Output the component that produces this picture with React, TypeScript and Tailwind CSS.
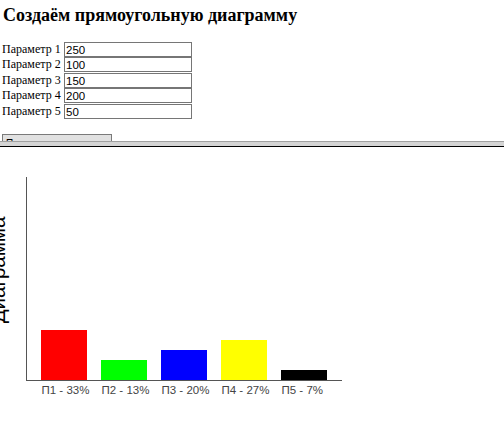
import React from 'react';

const params = [
  { label: 'Параметр 1', value: '250', h: 'h-[15px]' },
  { label: 'Параметр 2', value: '100', h: 'h-[16px]' },
  { label: 'Параметр 3', value: '150', h: 'h-[15px]' },
  { label: 'Параметр 4', value: '200', h: 'h-[16px]' },
  { label: 'Параметр 5', value: '50', h: 'h-[15px]' },
];

const bars = [
  { name: 'П1', value: 250, color: '#ff0000' },
  { name: 'П2', value: 100, color: '#00ff00' },
  { name: 'П3', value: 150, color: '#0000ff' },
  { name: 'П4', value: 200, color: '#ffff00' },
  { name: 'П5', value: 50, color: '#000000' },
];

function BarChart() {
  const total = bars.reduce((s, b) => s + b.value, 0);
  const base = 233;
  return (
    <svg width={504} height={280} className="block">
      <text
        transform="rotate(-90)"
        x={-123}
        y={5}
        textAnchor="middle"
        fontSize={20.5}
        fontFamily="'Liberation Sans', Arial, sans-serif"
        fill="#000"
      >
        Диаграмма
      </text>
      <line x1={26.5} y1={30} x2={26.5} y2={base + 1} stroke="#555" strokeWidth={1} />
      <line x1={26} y1={base + 0.5} x2={342} y2={base + 0.5} stroke="#555" strokeWidth={1} />
      {bars.map((b, i) => {
        const x = 41 + i * 60;
        const h = b.value / 5;
        const pct = Math.round((b.value / total) * 100);
        return (
          <g key={b.name}>
            <rect x={x} y={base - h} width={46} height={h} fill={b.color} />
            <text
              x={x + 0.5}
              y={247}
              fontSize={11.5}
              fontFamily="'Liberation Sans', Arial, sans-serif"
              fill="#444"
            >
              {b.name} - {pct}%
            </text>
          </g>
        );
      })}
    </svg>
  );
}

export default function App() {
  return (
    <div className="w-[504px] h-[427px] bg-white overflow-hidden font-['Liberation_Serif'] text-black">
      <div className="h-[141px] overflow-hidden">
        <h3 className="pt-[5px] pl-[3px] text-[18px] leading-[21px] font-bold font-['Liberation_Serif']">
          Создаём прямоугольную диаграмму
        </h3>
        <div className="mt-[16px] pl-[2px] flex flex-col">
          {params.map((p) => (
            <div key={p.label} className={`flex items-start ${p.h}`}>
              <span className="w-[62px] text-[12px] leading-[15px] whitespace-nowrap">{p.label}</span>
              <input
                readOnly
                value={p.value}
                className="w-[128px] h-[15px] border border-[#767676] px-px text-[11.5px] leading-[13px] font-['Liberation_Sans'] outline-none"
              />
            </div>
          ))}
        </div>
        <button className="mt-[15px] ml-[2px] w-[110px] h-[20px] border border-[#7a7a7a] bg-[#e1e1e1] text-[10px] leading-[12px] font-['Liberation_Sans'] whitespace-nowrap overflow-hidden">
          Построить диаграмму
        </button>
      </div>
      <div className="h-px bg-[#a0a0a0]" />
      <div className="h-[4px] bg-[#d4d4d4]" />
      <div className="h-px bg-black" />
      <BarChart />
    </div>
  );
}
